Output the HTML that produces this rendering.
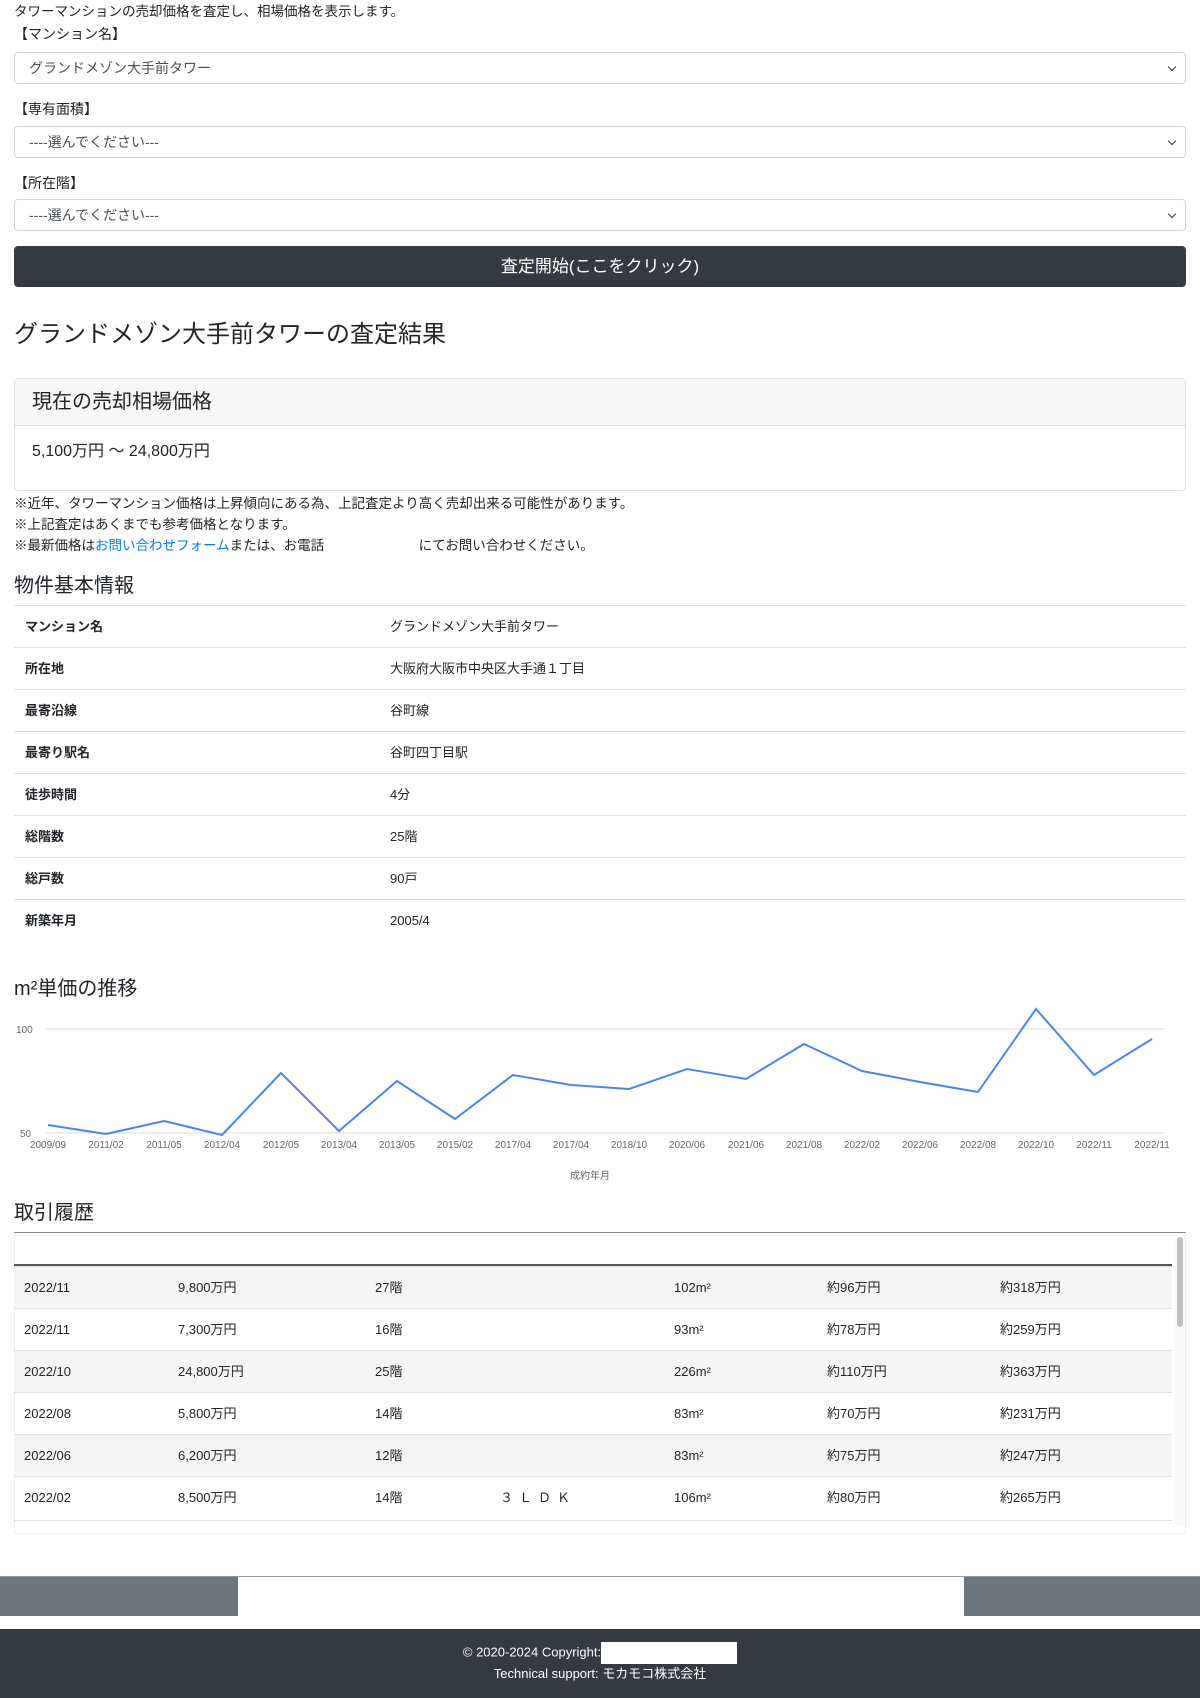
<!DOCTYPE html>
<html><head><meta charset="utf-8"><style>
*{box-sizing:border-box;margin:0;padding:0}
body{width:1200px;height:1698px;position:relative;font-family:"Liberation Sans","Noto Sans CJK JP",sans-serif;color:#212529;background:#fff;overflow:hidden}
.a{position:absolute}
.sel{position:absolute;left:14px;width:1172px;height:32px;border:1px solid #ced4da;border-radius:4px;font-size:14px;line-height:16px;color:#495057;padding:7px 14px}
.sel:after{content:"";position:absolute;right:10px;top:11px;width:5px;height:5px;border-right:1.5px solid #333;border-bottom:1.5px solid #333;transform:rotate(45deg)}
.lbl{position:absolute;left:14px;font-size:14px;line-height:18px}
.row{position:absolute;left:14px;width:1172px;height:42px;border-top:1px solid #dee2e6;font-size:13px;line-height:16px}
.row b{position:absolute;left:11px;top:13px;line-height:16px}
.row span{position:absolute;left:376px;top:13px;line-height:16px}
.tr{position:absolute;left:14px;width:1158px;height:42px;border-top:1px solid #dee2e6;font-size:13px}
.tr span{position:absolute;top:13px;line-height:16px;height:16px}
.x{position:absolute;top:1140px;font-size:10px;color:#666;width:60px;text-align:center}
</style></head><body>
<div class="a" style="left:14px;top:3px;font-size:13.5px;line-height:18px">タワーマンションの売却価格を査定し、相場価格を表示します。</div>
<div class="lbl" style="top:25px">【マンション名】</div>
<div class="sel" style="top:52px">グランドメゾン大手前タワー</div>
<div class="lbl" style="top:100px">【専有面積】</div>
<div class="sel" style="top:126px">----選んでください---</div>
<div class="lbl" style="top:174px">【所在階】</div>
<div class="sel" style="top:199px">----選んでください---</div>
<div class="a" style="left:14px;top:246px;width:1172px;height:41px;background:#343a40;border-radius:4px;color:#fff;font-size:17px;text-align:center;line-height:41px">査定開始(ここをクリック)</div>
<div class="a" style="left:14px;top:320px;font-size:24px;line-height:30px">グランドメゾン大手前タワーの査定結果</div>
<div class="a" style="left:14px;top:378px;width:1172px;height:113px;border:1px solid #dfdfdf;border-radius:4px">
<div style="height:47px;background:#f7f7f7;border-bottom:1px solid #dfdfdf;font-size:20px;line-height:26px;padding:10px 17px">現在の売却相場価格</div>
<div style="font-size:16px;line-height:20px;padding:16px 17px">5,100万円 ～ 24,800万円</div></div>
<div class="a" style="left:14px;top:493px;font-size:13.5px;line-height:21px">※近年、タワーマンション価格は上昇傾向にある為、上記査定より高く売却出来る可能性があります。<br>※上記査定はあくまでも参考価格となります。<br>※最新価格は<span style="color:#007bff">お問い合わせフォーム</span>または、お電話　　　　　　　にてお問い合わせください。</div>
<div class="a" style="left:14px;top:574px;font-size:20px;line-height:24px">物件基本情報</div>
<div class="row" style="top:605px"><b>マンション名</b><span>グランドメゾン大手前タワー</span></div>
<div class="row" style="top:647px"><b>所在地</b><span>大阪府大阪市中央区大手通１丁目</span></div>
<div class="row" style="top:689px"><b>最寄沿線</b><span>谷町線</span></div>
<div class="row" style="top:731px"><b>最寄り駅名</b><span>谷町四丁目駅</span></div>
<div class="row" style="top:773px"><b>徒歩時間</b><span>4分</span></div>
<div class="row" style="top:815px"><b>総階数</b><span>25階</span></div>
<div class="row" style="top:857px"><b>総戸数</b><span>90戸</span></div>
<div class="row" style="top:899px"><b>新築年月</b><span>2005/4</span></div>
<div class="a" style="left:14px;top:977px;font-size:20px;line-height:24px">m²単価の推移</div>
<svg class="a" style="left:0;top:1000px" width="1200" height="150">
<line x1="46" y1="29" x2="1164" y2="29" stroke="#ddd"/><line x1="46" y1="133" x2="1164" y2="133" stroke="#ddd"/>
<text x="16" y="33" font-size="10" fill="#666" font-family="Liberation Sans">100</text>
<text x="20" y="137" font-size="10" fill="#666" font-family="Liberation Sans">50</text>
<polyline fill="none" stroke="#4a86e8" stroke-width="2" points="48,125 106,134 164,121 222,135 281,73 339,131 397,81 455,119 513,75 571,85 629,89 687,69 746,79 804,44 862,71 920,82 978,92 1036,9 1094,75 1152,39"/>
</svg>
<div class="x" style="left:18px">2009/09</div><div class="x" style="left:76px">2011/02</div><div class="x" style="left:134px">2011/05</div><div class="x" style="left:192px">2012/04</div><div class="x" style="left:251px">2012/05</div><div class="x" style="left:309px">2013/04</div><div class="x" style="left:367px">2013/05</div><div class="x" style="left:425px">2015/02</div><div class="x" style="left:483px">2017/04</div><div class="x" style="left:541px">2017/04</div><div class="x" style="left:599px">2018/10</div><div class="x" style="left:657px">2020/06</div><div class="x" style="left:716px">2021/06</div><div class="x" style="left:774px">2021/08</div><div class="x" style="left:832px">2022/02</div><div class="x" style="left:890px">2022/06</div><div class="x" style="left:948px">2022/08</div><div class="x" style="left:1006px">2022/10</div><div class="x" style="left:1064px">2022/11</div><div class="x" style="left:1122px">2022/11</div>
<div class="a" style="left:570px;top:1167px;font-size:10px;color:#666">成約年月</div>
<div class="a" style="left:14px;top:1201px;font-size:20px;line-height:24px">取引履歴</div>
<div class="a" style="left:14px;top:1232px;width:1172px;border-top:1px solid #888"></div>
<div class="a" style="left:14px;top:1235px;width:1172px;height:299px;border:1px solid #eee"></div>
<div class="a" style="left:1175px;top:1235px;width:10px;height:290px;background:#fafafa"><div style="margin:2px;width:6px;height:90px;background:#c1c1c1;border-radius:3px"></div></div>
<div class="a" style="left:14px;top:1264px;width:1158px;border-top:2px solid #555"></div>
<div class="tr" style="top:1266px;background:#f5f5f5"><span style="left:10px">2022/11</span><span style="left:164px">9,800万円</span><span style="left:361px">27階</span><span style="left:660px">102m²</span><span style="left:813px">約96万円</span><span style="left:986px">約318万円</span></div>
<div class="tr" style="top:1308px"><span style="left:10px">2022/11</span><span style="left:164px">7,300万円</span><span style="left:361px">16階</span><span style="left:660px">93m²</span><span style="left:813px">約78万円</span><span style="left:986px">約259万円</span></div>
<div class="tr" style="top:1350px;background:#f5f5f5"><span style="left:10px">2022/10</span><span style="left:164px">24,800万円</span><span style="left:361px">25階</span><span style="left:660px">226m²</span><span style="left:813px">約110万円</span><span style="left:986px">約363万円</span></div>
<div class="tr" style="top:1392px"><span style="left:10px">2022/08</span><span style="left:164px">5,800万円</span><span style="left:361px">14階</span><span style="left:660px">83m²</span><span style="left:813px">約70万円</span><span style="left:986px">約231万円</span></div>
<div class="tr" style="top:1434px;background:#f5f5f5"><span style="left:10px">2022/06</span><span style="left:164px">6,200万円</span><span style="left:361px">12階</span><span style="left:660px">83m²</span><span style="left:813px">約75万円</span><span style="left:986px">約247万円</span></div>
<div class="tr" style="top:1476px;height:45px;border-bottom:1px solid #dee2e6"><span style="left:10px">2022/02</span><span style="left:164px">8,500万円</span><span style="left:361px">14階</span><span style="left:486px;letter-spacing:6px">３ＬＤＫ</span><span style="left:660px">106m²</span><span style="left:813px">約80万円</span><span style="left:986px">約265万円</span></div>
<div class="a" style="left:0;top:1576px;width:1200px;height:40px;background:#6c757d;border-top:1px solid #999"></div>
<div class="a" style="left:238px;top:1577px;width:726px;height:39px;background:#fff"></div>
<div class="a" style="left:0;top:1629px;width:1200px;height:69px;background:#343a40;color:#fff;font-size:13px;text-align:center;line-height:20px;padding-top:13px">© 2020-2024 Copyright:<span style="display:inline-block;width:136px;height:22px;background:#fff;vertical-align:middle"></span><br>Technical support: モカモコ株式会社</div>
</body></html>
